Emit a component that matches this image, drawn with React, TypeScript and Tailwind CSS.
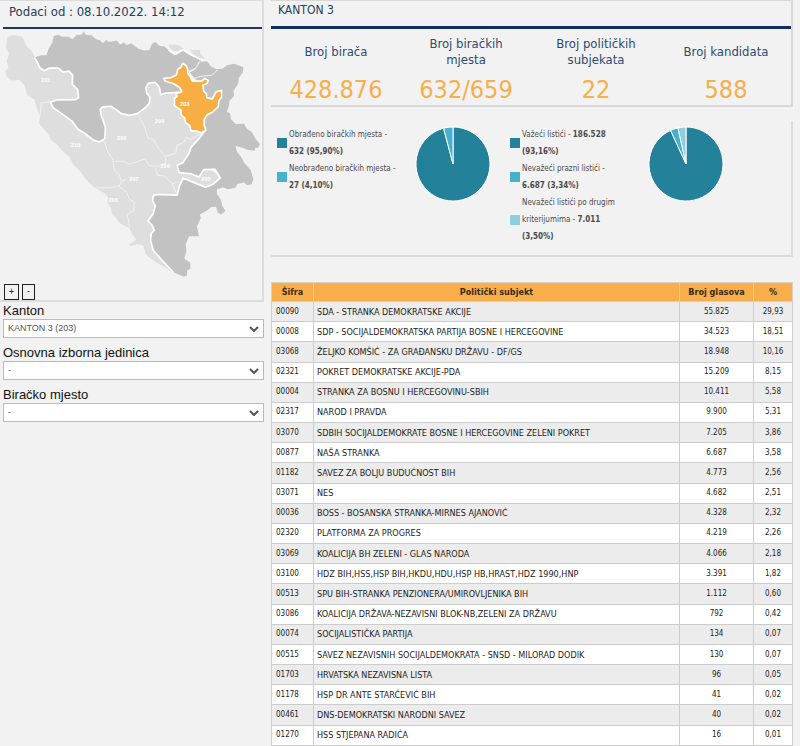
import { ReactNode } from "react";

const stats = [
  { label: "Broj birača", value: "428.876" },
  { label: "Broj biračkih mjesta", value: "632/659" },
  { label: "Broj političkih subjekata", value: "22" },
  { label: "Broj kandidata", value: "588" },
];

const rows = [
  ["00090", "SDA - STRANKA DEMOKRATSKE AKCIJE", "55.825", "29,93"],
  ["00008", "SDP - SOCIJALDEMOKRATSKA PARTIJA BOSNE I HERCEGOVINE", "34.523", "18,51"],
  ["03068", "ŽELJKO KOMŠIĆ - ZA GRAĐANSKU DRŽAVU - DF/GS", "18.948", "10,16"],
  ["02321", "POKRET DEMOKRATSKE AKCIJE-PDA", "15.209", "8,15"],
  ["00004", "STRANKA ZA BOSNU I HERCEGOVINU-SBIH", "10.411", "5,58"],
  ["02317", "NAROD I PRAVDA", "9.900", "5,31"],
  ["03070", "SDBIH SOCIJALDEMOKRATE BOSNE I HERCEGOVINE ZELENI POKRET", "7.205", "3,86"],
  ["00877", "NAŠA STRANKA", "6.687", "3,58"],
  ["01182", "SAVEZ ZA BOLJU BUDUĆNOST BIH", "4.773", "2,56"],
  ["03071", "NES", "4.682", "2,51"],
  ["00036", "BOSS - BOSANSKA STRANKA-MIRNES AJANOVIĆ", "4.328", "2,32"],
  ["02320", "PLATFORMA ZA PROGRES", "4.219", "2,26"],
  ["03069", "KOALICIJA BH ZELENI - GLAS NARODA", "4.066", "2,18"],
  ["03100", "HDZ BIH,HSS,HSP BIH,HKDU,HDU,HSP HB,HRAST,HDZ 1990,HNP", "3.391", "1,82"],
  ["00513", "SPU BIH-STRANKA PENZIONERA/UMIROVLJENIKA BIH", "1.112", "0,60"],
  ["03086", "KOALICIJA DRŽAVA-NEZAVISNI BLOK-NB,ZELENI ZA DRŽAVU", "792", "0,42"],
  ["00074", "SOCIJALISTIČKA PARTIJA", "134", "0,07"],
  ["00515", "SAVEZ NEZAVISNIH SOCIJALDEMOKRATA - SNSD - MILORAD DODIK", "130", "0,07"],
  ["01703", "HRVATSKA NEZAVISNA LISTA", "96", "0,05"],
  ["01178", "HSP DR ANTE STARČEVIĆ BIH", "41", "0,02"],
  ["00461", "DNS-DEMOKRATSKI NARODNI SAVEZ", "40", "0,02"],
  ["01270", "HSS STJEPANA RADIĆA", "16", "0,01"],
];

const filters = [
  { id: "kanton", label: "Kanton", value: "KANTON 3 (203)" },
  { id: "jedinica", label: "Osnovna izborna jedinica", value: "-" },
  { id: "mjesto", label: "Biračko mjesto", value: "-" },
];

const cantons = [
  { code: "201", x: 138, y: 242 },
  { code: "203", x: 557, y: 313 },
  { code: "204", x: 481, y: 364 },
  { code: "206", x: 367, y: 415 },
  { code: "210", x: 228, y: 438 },
  { code: "209", x: 498, y: 501 },
  { code: "207", x: 404, y: 540 },
  { code: "205", x: 621, y: 540 },
  { code: "208", x: 341, y: 603 },
];

function BosniaMap() {
  return (
    <svg viewBox="0 90 790 765" className="block w-full" strokeLinejoin="round" role="img" aria-label="Mapa izbornih jedinica">
      {/* federation */}
      <path
        fill="#dedede"
        d="M22 112 40 105 66 110 72 122 80 138 98 156 106 174 200 190 460 240 540 270 600 300 620 400 590 440 620 500 666 535 640 570 540 600 500 700 522 822 498 806 470 790 440 768 432 740 412 735 396 742 388 736 404 728 410 720 398 704 390 686 378 682 360 672 350 656 338 646 334 626 324 612 326 594 316 582 300 574 286 566 272 554 256 536 238 512 222 496 210 474 184 450 170 434 156 424 144 402 126 382 116 368 120 346 112 330 104 300 82 286 74 256 58 240 36 242 20 230 16 214 26 204 20 184 28 160 18 146Z"
      />
      <path fill="#dedede" d="M508 134 540 136 552 146 548 152 526 154 512 146ZM572 150 604 150 604 160 618 176 606 176 584 164Z" />
      {/* republika srpska */}
      <g fill="#c2c2c2">
        <path d="M104 173 124 166 140 166 146 148 158 128 162 108 176 104 186 110 206 110 218 118 232 104 246 104 252 94 258 104 276 106 290 118 302 122 310 130 320 120 330 126 352 122 362 134 374 128 382 136 396 130 416 146 434 152 450 150 458 132 468 126 482 138 496 140 508 150 528 164 552 150 574 164 600 178 612 182 600 186 590 204 570 214 560 240 560 290 540 278 500 280 485 285 480 262 468 248 448 250 440 264 442 280 452 292 450 312 436 326 414 342 390 347 366 342 350 330 334 320 310 322 302 330 306 350 312 366 318 386 316 418 300 428 282 422 256 402 236 390 216 364 186 342 160 324 152 308 170 301 228 300 237 294 234 270 218 254 219 226 208 214 190 217 176 205 148 205 134 213 120 204 114 190Z" />
        <path d="M572 218 588 208 602 186 624 184 636 200 654 208 672 206 684 196 706 192 734 202 732 218 720 234 718 252 704 274 706 288 692 304 690 320 684 336 694 342 696 358 712 374 736 372 744 388 760 398 770 418 784 434 778 446 770 444 768 454 748 452 730 444 710 440 714 456 728 474 736 490 756 512 764 540 758 556 744 558 736 550 716 554 710 566 686 570 672 564 654 570 654 584 666 602 670 620 680 636 666 646 656 640 652 624 638 624 624 634 602 646 606 656 594 682 600 712 570 712 560 736 562 756 556 780 574 792 574 810 564 816 564 830 554 834 522 820 490 786 462 754 454 724 456 704 465 694 458 678 446 666 462 644 468 620 460 604 462 590 474 586 534 588 540 564 552 536 580 548 620 564 644 554 664 536 648 510 614 511 604 530 578 526 540 520 534 498 552 490 570 462 576 444 600 418 618 394 600 330 600 250Z" />
      </g>
      <path
        fill="none"
        stroke="#fff"
        strokeWidth="5"
        d="M104 173 114 190 120 204 134 213 148 205 176 205 190 217 208 214 219 226 218 254 234 270 237 294 228 300 170 301 152 308 160 324 186 342 216 364 236 390 256 402 282 422 300 428 316 418 318 386 312 366 306 350 302 330 310 322 334 320 350 330 366 342 390 347 414 342 436 326 450 312 452 292 442 280 440 264 448 250 468 248 480 262 485 285 500 280 540 278M508 150 528 164 552 150 574 164 612 182M618 394 600 418 576 444 570 462 552 490 534 498 540 520 578 524 600 534 614 511 648 510 664 536 644 554 620 564 580 548 552 536 540 564 534 588 474 586 462 590 460 604 468 620 462 644 446 666 458 678 465 694 456 704 454 724 462 754 490 786 522 820"
      />
      {/* canton borders */}
      <path
        fill="none"
        stroke="#f1f1f1"
        strokeWidth="3"
        d="M152 306 124 310 122 340 116 366M316 426 322 450 340 482 344 512 360 526 366 546 360 560 330 566 286 566M342 486 374 486 388 494 412 488 436 478 452 500 480 500 500 492 498 470 480 450 462 420 446 416 436 382 418 348M500 470 530 462 534 438 552 430 562 414 574 420 606 402M466 504 476 528 496 530 520 554 534 548M520 554 534 588M360 562 382 580 390 600 404 608 404 634 382 646 388 666 390 684M366 546 380 540M602 186 588 208 572 216M656 210 640 226 604 230 580 238"
      />
      <path
        fill="#f7ae43"
        stroke="#fff"
        strokeWidth="5"
        d="M551 191 560 196 566 208 566 220 574 232 580 244 608 244 618 236 628 242 624 252 612 256 614 274 622 282 624 294 640 298 652 276 668 272 668 292 660 304 658 322 640 338 624 346 616 360 616 378 621 392 606 400 590 394 576 394 572 378 560 370 556 354 546 346 546 332 526 318 526 296 534 290 530 282 548 276 542 264 524 252 498 244 494 236 514 234 532 226 536 208 544 204Z"
      />
      <g fill="#fff" fontSize="17" fontWeight="700" textAnchor="middle" fontFamily="Liberation Sans, sans-serif">
        {cantons.map((c) => (
          <text key={c.code} x={c.x} y={c.y + 6}>
            {c.code}
          </text>
        ))}
      </g>
    </svg>
  );
}

const PIE_COLORS = ["#24819a", "#47b0cf", "#8fcde0"];

function Pie({ values, label }: { values: number[]; label: string }) {
  const total = values.reduce((a, b) => a + b, 0);
  let start = 0;
  return (
    <svg viewBox="-38 -38 76 76" className="block size-[76px] shrink-0" role="img" aria-label={label}>
      {values.map((v, i) => {
        const a0 = (start / total) * Math.PI * 2;
        start += v;
        const a1 = (start / total) * Math.PI * 2;
        const r = 37;
        const d = `M0 0L${r * Math.sin(a0)} ${-r * Math.cos(a0)}A${r} ${r} 0 ${a1 - a0 > Math.PI ? 1 : 0} 1 ${r * Math.sin(a1)} ${-r * Math.cos(a1)}Z`;
        return <path key={i} d={d} fill={PIE_COLORS[i]} stroke="#fff" strokeWidth="1" strokeLinejoin="round" />;
      })}
    </svg>
  );
}

function LegendItem({ swatch, children }: { swatch: string; children: ReactNode }) {
  return (
    <li className="flex items-center">
      <span className={`mr-0.5 size-[10px] shrink-0 ${swatch}`} />
      <span>{children}</span>
    </li>
  );
}

function Filter({ id, label, value }: { id: string; label: string; value: string }) {
  return (
    <div className="mb-1.5">
      <label htmlFor={id} className="block font-['Liberation_Sans',Arial,sans-serif] text-[13px] leading-[17px] text-[#111]">
        {label}
      </label>
      <div className="relative">
        <select
          id={id}
          className="block h-[19px] w-full appearance-none border border-[#bbb] bg-white px-1 font-['Liberation_Sans',Arial,sans-serif] text-[9px] leading-4 text-[#555]"
        >
          <option>{value}</option>
        </select>
        <svg viewBox="0 0 10 6" className="pointer-events-none absolute top-[7px] right-[5px] h-[6px] w-[10px]">
          <path d="M1 1 5 5 9 1" fill="none" stroke="#555" strokeWidth="2" />
        </svg>
      </div>
    </div>
  );
}

export default function App() {
  return (
    <div className="flex min-h-screen items-start gap-[7px] bg-[#f2f2f2] font-['DejaVu_Sans_Condensed','DejaVu_Sans',sans-serif]">
      <aside className="w-[33%]">
        <div className="border-t border-r-2 border-b-2 border-[#dcdcdc] pl-[3px]">
          <h2 className="border-b-2 border-[#1d3863] pt-px pb-1.5 pl-[6px] text-[13px] leading-[19px] text-[#24405f]">
            Podaci od : 08.10.2022. 14:12
          </h2>
          <div className="-ml-[3px] pt-px">
            <BosniaMap />
          </div>
          <div className="flex gap-[3px] px-px text-[8px] leading-none text-black">
            <button type="button" aria-label="Uvećaj" className="h-4 w-[15px] border border-[#222]">
              +
            </button>
            <button type="button" aria-label="Umanji" className="h-4 w-[13px] border border-[#222]">
              -
            </button>
          </div>
        </div>
        <div className="pl-[3px]">
          {filters.map((f) => (
            <Filter key={f.id} {...f} />
          ))}
        </div>
      </aside>

      <main className="min-w-0 flex-1 pr-[7px]">
        <section className="border-t border-r-2 border-b-2 border-[#d8d8d8]">
          <h1 className="border-b-3 border-[#12305f] pb-1.5 pl-[7px] text-[12px] leading-[19px] text-[#24405f]">KANTON 3</h1>
          <dl className="grid grid-cols-4 pt-[7px] text-center">
            {stats.map((s) => (
              <div key={s.label}>
                <dt className="flex h-8 items-center justify-center px-4 text-[13px] leading-4 text-[#2f4a6f]">{s.label}</dt>
                <dd className="mt-1.5 text-[25px] leading-[31px] text-[#f7ae4b]">{s.value}</dd>
              </div>
            ))}
          </dl>
        </section>

        <section className="mt-[14px] grid grid-cols-[233px_1fr] border-r-2 border-b-2 border-[#dcdcdc] pt-[5px] pb-[10px] pl-[6px] text-[8px] leading-[17px] text-[#4a4a4a]">
          <div className="flex items-start">
            <ul className="w-[138px] pr-4">
              <LegendItem swatch="bg-[#24819a]">
                Obrađeno biračkih mjesta - <b>632 (95,90%)</b>
              </LegendItem>
              <LegendItem swatch="bg-[#47b0cf]">
                Neobrađeno biračkih mjesta - <b>27 (4,10%)</b>
              </LegendItem>
            </ul>
            <Pie values={[95.9, 4.1]} label="Obrađenost biračkih mjesta" />
          </div>
          <div className="flex items-start">
            <ul className="w-[138px] pr-7">
              <LegendItem swatch="bg-[#24819a]">
                Važeći listići - <b>186.528</b> <b>(93,16%)</b>
              </LegendItem>
              <LegendItem swatch="bg-[#47b0cf]">
                Nevažeći prazni listići - <b>6.687 (3,34%)</b>
              </LegendItem>
              <LegendItem swatch="bg-[#8fcde0]">
                Nevažeći listići po drugim kriterijumima - <b>7.011</b> <b>(3,50%)</b>
              </LegendItem>
            </ul>
            <Pie values={[93.16, 3.34, 3.5]} label="Važeći i nevažeći listići" />
          </div>
        </section>

        <table className="mt-[25px] h-[464px] w-full border-collapse text-[8px] leading-4 text-[#222]">
          <thead>
            <tr className="h-[19px] bg-[#f7ae4b] text-[9px] text-[#3a2c14]">
              <th className="w-[42px] border border-[#d8d0c4]">Šifra</th>
              <th className="border border-[#d8d0c4]">Politički subjekt</th>
              <th className="w-[74px] border border-[#d8d0c4]">Broj glasova</th>
              <th className="w-[39px] border border-[#d8d0c4]">%</th>
            </tr>
          </thead>
          <tbody>
            {rows.map(([code, name, votes, pct]) => (
              <tr key={code} className="odd:bg-[#ececec] even:bg-white">
                <td className="border border-[#ccc] px-1">{code}</td>
                <td className="border border-[#ccc] px-[3px] text-[9px]">{name}</td>
                <td className="border border-[#ccc] px-1 text-center">{votes}</td>
                <td className="border border-[#ccc] px-1 text-center">{pct}</td>
              </tr>
            ))}
          </tbody>
        </table>
      </main>
    </div>
  );
}
